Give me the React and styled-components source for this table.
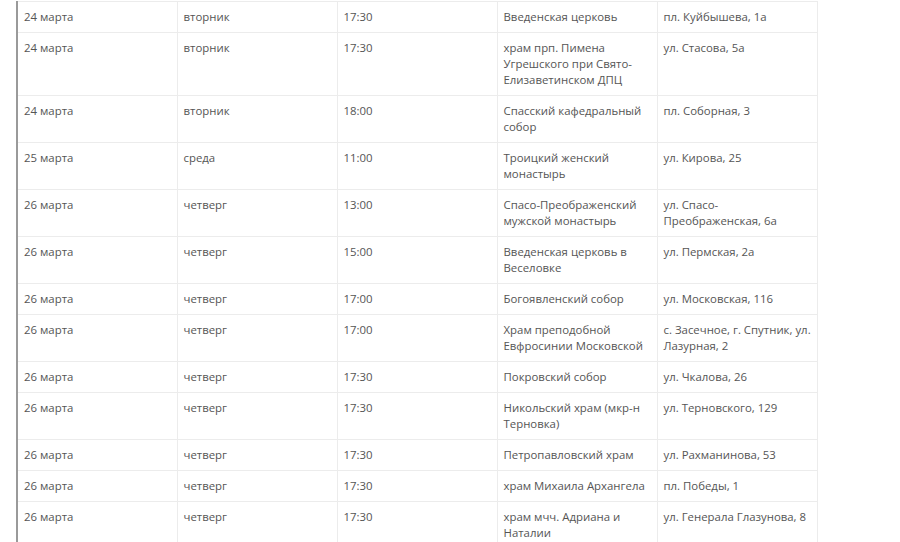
import React from 'react'
import styled, { createGlobalStyle } from 'styled-components'

const GlobalStyle = createGlobalStyle`
  body {
    margin: 0;
    background: #fff;
  }
`

const rows = [
  ['24 марта', 'вторник', '17:30', 'Введенская церковь', 'пл. Куйбышева, 1а'],
  ['24 марта', 'вторник', '17:30', 'храм прп. Пимена Угрешского при Свято-Елизаветинском ДПЦ', 'ул. Стасова, 5а'],
  ['24 марта', 'вторник', '18:00', 'Спасский кафедральный собор', 'пл. Соборная, 3'],
  ['25 марта', 'среда', '11:00', 'Троицкий женский монастырь', 'ул. Кирова, 25'],
  ['26 марта', 'четверг', '13:00', 'Спасо-Преображенский мужской монастырь', 'ул. Спасо-Преображенская, 6а'],
  ['26 марта', 'четверг', '15:00', 'Введенская церковь в Веселовке', 'ул. Пермская, 2а'],
  ['26 марта', 'четверг', '17:00', 'Богоявленский собор', 'ул. Московская, 116'],
  ['26 марта', 'четверг', '17:00', 'Храм преподобной Евфросинии Московской', 'с. Засечное, г. Спутник, ул. Лазурная, 2'],
  ['26 марта', 'четверг', '17:30', 'Покровский собор', 'ул. Чкалова, 26'],
  ['26 марта', 'четверг', '17:30', 'Никольский храм (мкр-н Терновка)', 'ул. Терновского, 129'],
  ['26 марта', 'четверг', '17:30', 'Петропавловский храм', 'ул. Рахманинова, 53'],
  ['26 марта', 'четверг', '17:30', 'храм Михаила Архангела', 'пл. Победы, 1'],
  ['26 марта', 'четверг', '17:30', 'храм мчч. Адриана и Наталии', 'ул. Генерала Глазунова, 8'],
]

const Schedule = () => {
  return (
    <Wrap>
      <Table>
        <colgroup>
          {[160, 160, 160, 160, 160].map((w, i) => <Col key={i} $w={w} />)}
        </colgroup>
        <tbody>
          {rows.map((r, i) => (
            <Row key={i}>
              {r.map((c, j) => (
                <Cell key={j} $first={j === 0}>{c}</Cell>
              ))}
            </Row>
          ))}
        </tbody>
      </Table>
    </Wrap>
  )
}

const App = () => (
  <>
    <GlobalStyle />
    <Schedule />
  </>
)

const Wrap = styled.div`
  padding: 1px 0 0 16px;
  height: 541px;
  overflow: hidden;
`

const Table = styled.table`
  border-collapse: collapse;
  table-layout: fixed;
  width: 800px;
  font-family: 'Open Sans', 'Noto Sans', sans-serif;
  font-size: 11.4px;
  line-height: 16px;
  color: #555;
`

const Col = styled.col`
  width: ${p => p.$w}px;
`

const Row = styled.tr`
  border-top: 1px solid #ececec;
`

const Cell = styled.td`
  box-sizing: border-box;
  vertical-align: top;
  padding: 7px 5px 7px 6px;
  border-right: 1px solid #ececec;
  border-left: ${p => (p.$first ? '2px solid #9a9a9a' : 'none')};
`

export default App
